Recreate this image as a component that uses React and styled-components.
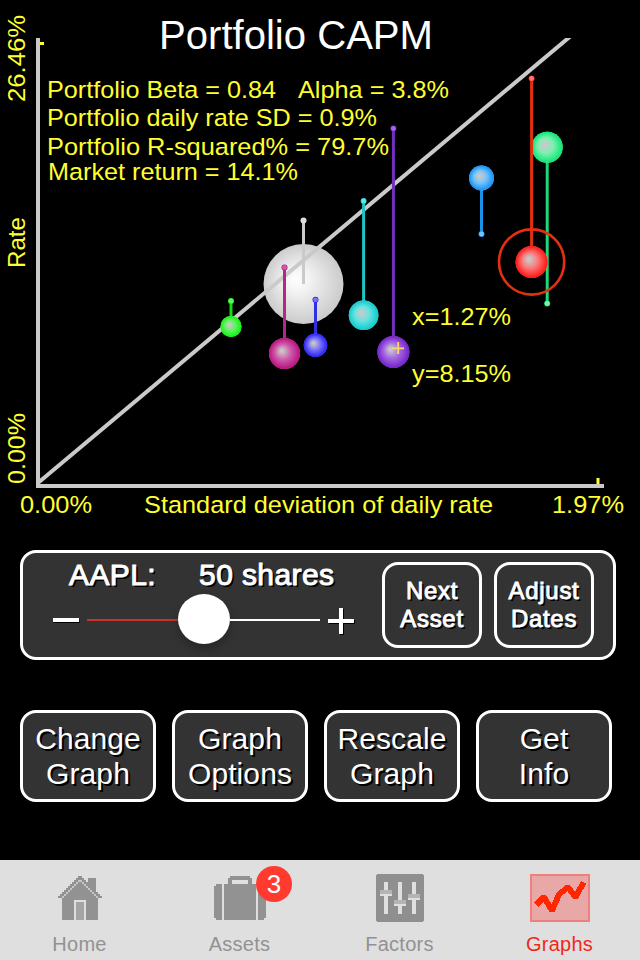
import React from "react";
import styled, { createGlobalStyle } from "styled-components";

const GlobalStyle = createGlobalStyle`
    * {
        box-sizing: border-box;
    }

    body {
        margin: 0;
        background-color: #000;
        font-family: "Liberation Sans", Arial, sans-serif;
    }
`;

const Screen = styled.div`
    width: 640px;
    height: 960px;
    display: flex;
    flex-direction: column;
    background-color: #000;
    overflow: hidden;
`;

const Chart = styled.svg`
    display: block;
    width: 640px;
    height: 550px;
    flex-shrink: 0;
    font-family: "Liberation Sans", Arial, sans-serif;
`;

const ControlPanel = styled.section`
    display: flex;
    width: 596px;
    height: 110px;
    margin-left: 20px;
    padding: 9px 19px 0 0;
    flex-shrink: 0;
    background-color: #333;
    border: 3px solid #fff;
    border-radius: 16px;
`;

const SliderArea = styled.div`
    width: 359px;
    height: 92px;
    flex-shrink: 0;
`;

const AssetLine = styled.div`
    display: flex;
    gap: 43px;
    height: 26px;
    padding-left: 46px;
    color: #fff;
    font-size: 30px;
    line-height: 26px;
    letter-spacing: 0.4px;
    white-space: nowrap;
    -webkit-text-stroke: 1px #fff;
    text-shadow: 2px 2px 0 #000;
`;

const SliderRow = styled.div`
    display: flex;
    align-items: center;
    height: 50px;
    margin-top: 6px;
    padding-left: 29px;
`;

const Sign = styled.svg`
    display: block;
    width: 28px;
    height: 30px;
    flex-shrink: 0;
    margin-top: ${props => props.$minus ? 2 : 4}px;
`;

const Track = styled.div`
    display: flex;
    align-items: center;
    width: 233px;
    margin: 0 7px 0 7px;
`;

const TrackPart = styled.div`
    width: ${props => props.$width}px;
    height: 2px;
    margin-top: 1px;
    background-color: ${props => props.$color};
`;

const Thumb = styled.div`
    width: 52px;
    height: 50px;
    border-radius: 50%;
    background-color: #fff;
    box-shadow: 0 5px 9px rgba(0, 0, 0, 0.25);
`;

const SmallButtons = styled.div`
    display: flex;
    gap: 12px;
`;

const Button = styled.button`
    width: ${props => props.$small ? 100 : 136}px;
    height: ${props => props.$small ? 86 : 92}px;
    padding: 0;
    color: #fff;
    background-color: #333;
    border: 3px solid #fff;
    border-radius: 16px;
    font-family: inherit;
    font-size: ${props => props.$small ? 24 : 30}px;
    line-height: ${props => props.$small ? 28 : 35}px;
    letter-spacing: ${props => props.$small ? 0.7 : 0.1}px;
    text-align: center;
    white-space: pre-line;
    text-shadow: 2px 2px 0 #000;
    -webkit-text-stroke: ${props => props.$small ? "0.9px #fff" : "0"};
`;

const ButtonRow = styled.div`
    display: flex;
    gap: 16px;
    margin: 50px 0 0 20px;
`;

const TabBar = styled.nav`
    display: flex;
    height: 100px;
    margin-top: auto;
    background-color: #dfdfdf;
`;

const Tab = styled.div`
    width: 160px;
    display: flex;
    flex-direction: column;
    align-items: center;
    color: ${props => props.$active ? "#f0281a" : "#929292"};
`;

const IconHolder = styled.div`
    position: relative;
    display: flex;
    align-items: center;
    height: 48px;
    margin-top: 14px;
`;

const TabIcon = styled.svg`
    display: block;
    width: ${props => props.$width}px;
    height: ${props => props.$height}px;
    shape-rendering: crispEdges;
`;

const TabLabel = styled.span`
    margin: 11px 1px 0 0;
    font-size: 20px;
    line-height: 23px;
    letter-spacing: 0.25px;
`;

const Badge = styled.span`
    position: absolute;
    top: -8px;
    left: 42px;
    width: 36px;
    height: 36px;
    border-radius: 50%;
    background-color: #ff3b30;
    color: #fff;
    font-size: 26px;
    line-height: 37px;
    text-align: center;
`;

const YELLOW = "#ffff2e";
const GREY = "#cacaca";

// x, ball y, ball radius, y of the small end
const pins = [
    { id: "lime", x: 231, y: 326.5, r: 10.5, end: 301, line: "#12dd12", mid: "#63f163", edge: "#0cf50c" },
    { id: "magenta", x: 284.5, y: 353.5, r: 15.5, end: 267.5, line: "#b02888", mid: "#cf5cab", edge: "#b9127f" },
    { id: "blue", x: 315.5, y: 345.3, r: 11.7, end: 299.8, line: "#3030e0", mid: "#7a75f7", edge: "#2a20f7" },
    { id: "cyan", x: 363.6, y: 315.3, r: 14.8, end: 201, line: "#1fc4c4", mid: "#66e3e3", edge: "#0fcaca" },
    { id: "purple", x: 393.4, y: 352, r: 16, end: 128.5, line: "#7330c0", mid: "#a468e0", edge: "#7420cb" },
    { id: "sky", x: 481.5, y: 178, r: 12.5, end: 234, line: "#1c92e6", mid: "#78c2f8", edge: "#0d92fa" },
    { id: "green", x: 547.2, y: 147.3, r: 15.5, end: 303.5, line: "#1fd878", mid: "#7cf0b0", edge: "#0ae673" },
    { id: "red", x: 531.6, y: 262, r: 16, end: 78.5, line: "#e3300f", mid: "#fb7878", edge: "#fd1410" },
];

const labels = [
    { text: "Portfolio Beta = 0.84", x: 47, y: 98, w: 229 },
    { text: "Alpha = 3.8%", x: 298, y: 97.5, w: 151 },
    { text: "Portfolio daily rate SD = 0.9%", x: 47, y: 126, w: 330 },
    { text: "Portfolio R-squared% = 79.7%", x: 47, y: 155, w: 342 },
    { text: "Market return = 14.1%", x: 48, y: 180, w: 250 },
    { text: "x=1.27%", x: 412, y: 325, w: 99 },
    { text: "y=8.15%", x: 412, y: 382, w: 99 },
    { text: "0.00%", x: 20, y: 513, w: 72 },
    { text: "Standard deviation of daily rate", x: 144, y: 513, w: 349 },
    { text: "1.97%", x: 552, y: 513, w: 72 },
    { text: "26.46%", x: 25, y: 102, w: 87, up: true },
    { text: "Rate", x: 25, y: 268, w: 51, up: true },
    { text: "0.00%", x: 25, y: 484, w: 71, up: true },
];

function Pin({ pin }) {
    return (
    <g>
        <radialGradient id={pin.id} cx="0.5" cy="0.5" r="0.5" fx="0.4" fy="0.4">
            <stop offset="0" stopColor="#cacaca" />
            <stop offset="0.1" stopColor="#cacaca" stopOpacity="0.9" />
            <stop offset="0.5" stopColor={pin.mid} />
            <stop offset="1" stopColor={pin.edge} />
        </radialGradient>
        <line x1={pin.x} x2={pin.x} y1={pin.y} y2={pin.end} stroke={pin.line} strokeWidth="3" />
        <circle cx={pin.x} cy={pin.end} r="3" fill={pin.edge} />
        <circle cx={pin.x} cy={pin.end} r="2.4" fill={pin.mid} />
        <circle cx={pin.x} cy={pin.y} r={pin.r} fill={pin.mid} />
        <circle cx={pin.x} cy={pin.y} r={pin.r} fill={`url(#${pin.id})`} />
    </g>
    );
}

function CapmChart() {
    return (
    <Chart viewBox="0 0 640 550">
        <defs>
            <clipPath id="plot">
                <rect x="36" y="38" width="604" height="450" />
            </clipPath>
            <radialGradient id="portfolio" cx="0.5" cy="0.5" r="0.52" fx="0.39" fy="0.43">
                <stop offset="0" stopColor="#fff" />
                <stop offset="0.3" stopColor="#f2f2f2" />
                <stop offset="1" stopColor="#c9c9c9" />
            </radialGradient>
        </defs>
        <circle cx="303.5" cy="284" r="40" fill="url(#portfolio)" />
        <line x1="37" y1="483.8" x2="576" y2="31.6" stroke={GREY} strokeWidth="4" clipPath="url(#plot)" />
        <rect x="36" y="38" width="4" height="450" fill={GREY} />
        <rect x="36" y="484" width="568" height="4" fill={GREY} />
        <rect x="40" y="42" width="4" height="3" fill={YELLOW} />
        <rect x="596.5" y="478" width="3" height="6" fill={YELLOW} />
        <line x1="303.5" x2="303.5" y1="221" y2="284" stroke={GREY} strokeWidth="3" />
        <circle cx="303.5" cy="220.5" r="3" fill="#dedede" />
        {pins.map(pin => <Pin key={pin.id} pin={pin} />)}
        <circle cx="531.6" cy="262" r="32.6" fill="none" stroke="#e3300f" strokeWidth="2.6" />
        <path d="M392 348.3h12M398.2 342v12" stroke="#fbd66a" strokeWidth="1.8" />
        <text x="159" y="49" fontSize="40" textLength="274" lengthAdjust="spacingAndGlyphs" fill="#fff">Portfolio CAPM</text>
        {labels.map(l => (
            <text
                key={l.text + l.x}
                x={l.up ? 0 : l.x}
                y={l.up ? 0 : l.y}
                transform={l.up ? `translate(${l.x} ${l.y}) rotate(-90)` : undefined}
                fontSize="24.5"
                textLength={l.w}
                lengthAdjust="spacingAndGlyphs"
                fill={YELLOW}
            >
                {l.text}
            </text>
        ))}
    </Chart>
    );
}

function HomeIcon() {
    const rows = [0, 1, 2, 3, 4, 5, 6, 7, 8, 9];
    return (
    <TabIcon $width={44} $height={44} viewBox="0 0 22 22" fill="#929292">
        <rect x="15" y="1" width="4" height="7" />
        {rows.map(i => <rect key={i} x={10 - i} y={i} width={2 + i * 2} height="1" />)}
        <rect x="0" y="10" width="22" height="1" />
        <rect x="2" y="11" width="18" height="11" />
        {rows.slice(2).map(i => (
            <g key={i} fill="#c6c6c6">
                <rect x={12 - i} y={i} width="1" height="1" />
                <rect x={9 + i} y={i} width="1" height="1" />
            </g>
        ))}
        <path d="M2 10h1v1h-1zM19 10h1v1h-1z" fill="#c6c6c6" />
        <rect x="8" y="12" width="6" height="10" fill="#dfdfdf" />
        <rect x="9" y="13" width="4" height="9" fill="#a4a4a4" />
    </TabIcon>
    );
}

function CaseIcon() {
    return (
    <TabIcon $width={52} $height={44} viewBox="0 0 26 22" fill="#929292">
        <path d="M8 0h10v1h1v3h-2v-2h-8v2h-2v-3h1z" />
        <path d="M1 4h3v18h-3v-1h-1v-16h1z" />
        <rect x="5" y="4" width="16" height="18" />
        <path d="M22 4h3v1h1v16h-1v1h-3z" />
    </TabIcon>
    );
}

function FadersIcon() {
    const faders = [{ x: 2, y: 8 }, { x: 9, y: 13 }, { x: 16, y: 10 }];
    return (
    <TabIcon $width={48} $height={48} viewBox="0 0 24 24">
        <path d="M.5 0h23v.5h.5v23h-.5v.5h-23v-.5h-.5v-23h.5z" fill="#8f8f8f" />
        {faders.map(f => (
            <g key={f.x}>
                <rect x={f.x + 2} y="4" width="2" height="16" fill="#dfdfdf" />
                <rect x={f.x} y={f.y} width="6" height="2" fill="#b4b4b4" />
                <rect x={f.x} y={f.y + 2} width="6" height="1" fill="#dfdfdf" />
            </g>
        ))}
    </TabIcon>
    );
}

function GraphIcon() {
    return (
    <TabIcon $width={60} $height={48} viewBox="0 0 30 24">
        <rect width="30" height="24" fill="#ef7f7c" />
        <rect x="1" y="1" width="28" height="22" fill="#e8a8a7" />
        <path
            d="M3 15.5L7 11.5L11 18.3L14.5 10.2L19 6.6L22.7 11.6L26.8 4.2"
            fill="none"
            stroke="#ff2600"
            strokeWidth="2.9"
            strokeLinejoin="bevel"
        />
    </TabIcon>
    );
}

export default function App() {
    return (
    <Screen>
        <GlobalStyle />
        <CapmChart />
        <ControlPanel>
            <SliderArea>
                <AssetLine>
                    <span>AAPL:</span>
                    <span>50 shares</span>
                </AssetLine>
                <SliderRow>
                    <Sign $minus viewBox="0 0 28 30">
                        <path d="M1.5 16h26" stroke="#000" strokeWidth="4" />
                        <path d="M1 15h26" stroke="#fff" strokeWidth="4" />
                    </Sign>
                    <Track>
                        <TrackPart $width={91} $color="#c83228" />
                        <Thumb />
                        <TrackPart $width={90} $color="#fff" />
                    </Track>
                    <Sign viewBox="0 0 28 30">
                        <path d="M2 16h26M15 3v26" stroke="#000" strokeWidth="4" />
                        <path d="M1 15h26M14 2v26" stroke="#fff" strokeWidth="4" />
                    </Sign>
                </SliderRow>
            </SliderArea>
            <SmallButtons>
                <Button $small>{"Next\nAsset"}</Button>
                <Button $small>{"Adjust\nDates"}</Button>
            </SmallButtons>
        </ControlPanel>
        <ButtonRow>
            <Button>{"Change\nGraph"}</Button>
            <Button>{"Graph\nOptions"}</Button>
            <Button>{"Rescale\nGraph"}</Button>
            <Button>{"Get\nInfo"}</Button>
        </ButtonRow>
        <TabBar>
            <Tab>
                <IconHolder><HomeIcon /></IconHolder>
                <TabLabel>Home</TabLabel>
            </Tab>
            <Tab>
                <IconHolder>
                    <CaseIcon />
                    <Badge>3</Badge>
                </IconHolder>
                <TabLabel>Assets</TabLabel>
            </Tab>
            <Tab>
                <IconHolder><FadersIcon /></IconHolder>
                <TabLabel>Factors</TabLabel>
            </Tab>
            <Tab $active>
                <IconHolder><GraphIcon /></IconHolder>
                <TabLabel>Graphs</TabLabel>
            </Tab>
        </TabBar>
    </Screen>
    );
}
